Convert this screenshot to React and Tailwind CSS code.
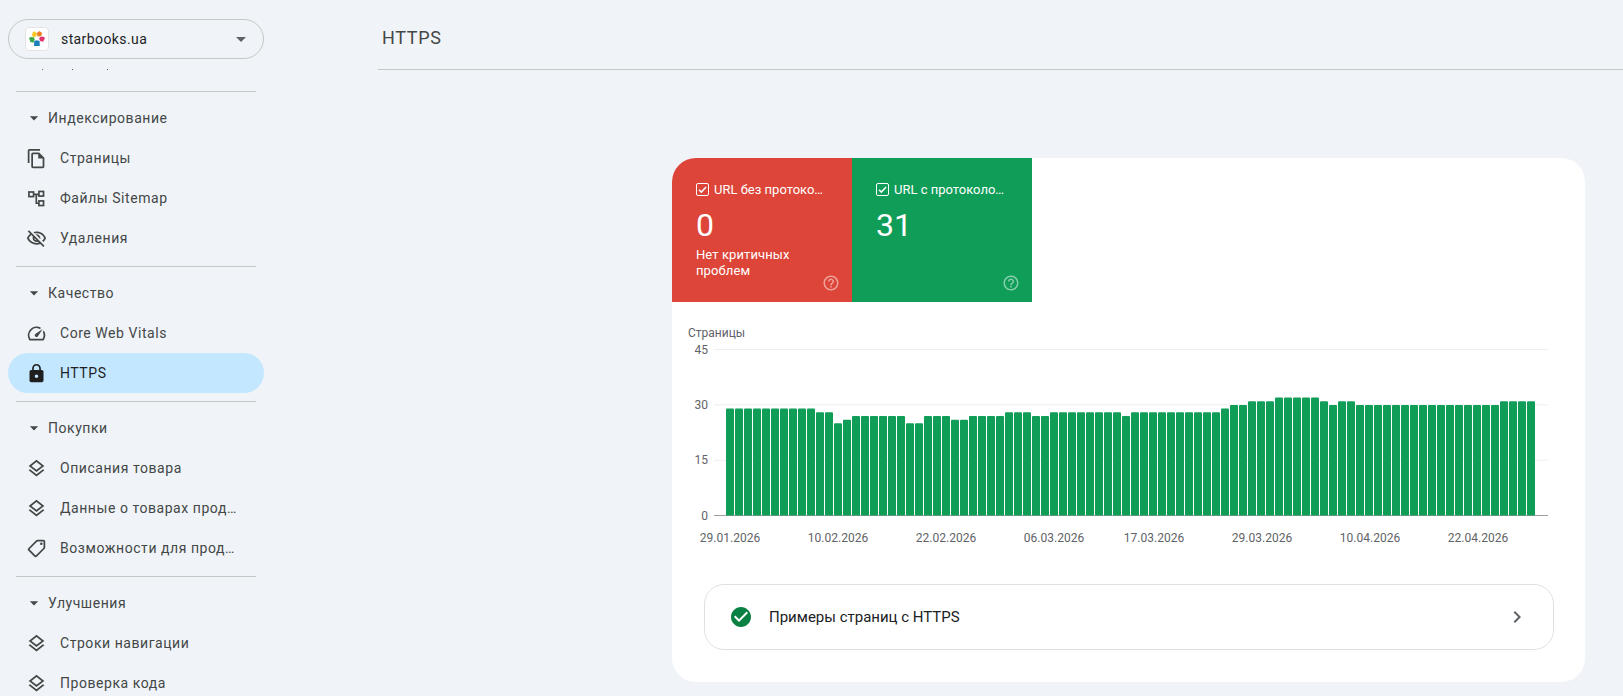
import {
  MdOutlineFileCopy,
  MdOutlineVisibilityOff,
  MdOutlineSpeed,
  MdLock,
  MdOutlineLayers,
  MdOutlineLocalOffer,
  MdArrowDropDown,
  MdCheckCircle,
  MdChevronRight,
  MdHelpOutline,
} from 'react-icons/md';

const SitemapIcon = ({ className }) => (
  <svg viewBox="0 0 20 20" fill="none" stroke="currentColor" strokeWidth="1.6" className={className}>
    <rect x="2.8" y="3.8" width="4.4" height="4.4" />
    <rect x="12.3" y="3.3" width="4.4" height="4.4" />
    <rect x="12.3" y="12.3" width="4.4" height="4.4" />
    <path d="M7.2 6h5.1M9.8 6v8.5h2.5" />
  </svg>
);

const TagIcon = ({ className }) => <MdOutlineLocalOffer className={`${className} -scale-x-100`} />;

const Logo = () => (
  <svg viewBox="0 0 24 24" className="w-6 h-6 shrink-0">
    <path d="M7.500 5.500l1.700-1.200 1.600 1.200.9.300-.3 3.700-3.300.6-1.400-2.400.9-.8z" fill="#f9c623" />
    <path d="M12.800 5.200l1.700-1.200 1.600 1.200 1 .7-1 3.300-3.300.4-1.200-3.200z" fill="#ee7d23" />
    <path d="M14.800 10.300l2-.8 2.200.5 1 1-1.900 3.700-3-.7-.9-2.300z" fill="#e0346f" />
    <path d="M9.200 14l2.700-.8 2.700.8.200 5h-5.800z" fill="#1f7fb8" />
    <path d="M4 10.800l2.200-.8 3 .6.500 2.200-1.500 3-2.800-.9z" fill="#3aa845" />
  </svg>
);

const CheckSmall = () => (
  <svg viewBox="0 0 13 13" fill="none" stroke="#fff" className="w-[13px] h-[13px] shrink-0">
    <rect x="0.5" y="0.5" width="12" height="12" rx="1.5" />
    <path d="M3 6.800l2.300 2.300 4.800-5" strokeWidth="1.500" />
  </svg>
);

const sections = [
  {
    title: 'Индексирование',
    items: [
      { label: 'Страницы', Icon: MdOutlineFileCopy },
      { label: 'Файлы Sitemap', Icon: SitemapIcon },
      { label: 'Удаления', Icon: MdOutlineVisibilityOff },
    ],
  },
  {
    title: 'Качество',
    items: [
      { label: 'Core Web Vitals', Icon: MdOutlineSpeed },
      { label: 'HTTPS', Icon: MdLock, active: true },
    ],
  },
  {
    title: 'Покупки',
    items: [
      { label: 'Описания товара', Icon: MdOutlineLayers },
      { label: 'Данные о товарах продавца', Icon: MdOutlineLayers },
      { label: 'Возможности для продавцов', Icon: TagIcon },
    ],
  },
  {
    title: 'Улучшения',
    items: [
      { label: 'Строки навигации', Icon: MdOutlineLayers },
      { label: 'Проверка кода', Icon: MdOutlineLayers },
    ],
  },
];

const Sidebar = () => (
  <aside className="w-[272px] shrink-0 font-['Roboto',sans-serif]">
    <div className="h-[69px] pt-[19px] px-2">
      <div className="h-10 w-[256px] rounded-full border border-[#c4c7c5] flex items-center pl-4 pr-[7px]">
        <span className="w-6 h-6 bg-white border border-[#e3e3e3] rounded-sm flex items-center justify-center shrink-0">
          <Logo />
        </span>
        <span className="ml-3 text-sm text-[#1f1f1f] tracking-[0.4px] flex-1">starbooks.ua</span>
        <MdArrowDropDown className="w-6 h-6 text-[#5f6368] mr-[3px]" />
      </div>
    </div>
    <div className="h-px flex text-[0px]">
      <span className="ml-[42px] w-px h-px bg-[#777]" />
      <span className="ml-[29px] w-px h-px bg-[#555]" />
      <span className="ml-[34px] w-px h-px bg-[#555]" />
    </div>
    <nav className="mt-[21px]">
      {sections.map((s) => (
        <div key={s.title} className="mb-2">
          <div className="h-px mx-4 bg-[#c4c7c5]" />
          <div className="h-[46px] pt-1.5 pl-6 flex items-center text-sm text-[#444746] tracking-[0.55px]">
            <MdArrowDropDown className="w-5 h-5 mr-1 text-[#444746]" />
            {s.title}
          </div>
          {s.items.map(({ label, Icon, active }) => (
            <div
              key={label}
              className={`h-10 mx-2 pl-[18px] pr-6 rounded-full flex items-center text-sm tracking-[0.55px] ${
                active ? 'bg-[#c2e7ff] text-[#1f1f1f]' : 'text-[#444746]'
              }`}
            >
              <Icon className={`w-[21px] h-[21px] shrink-0 ${active ? 'text-[#1f1f1f]' : 'text-[#444746]'}`} />
              <span className="ml-[13px] truncate">{label}</span>
            </div>
          ))}
        </div>
      ))}
    </nav>
  </aside>
);

const Tile = ({ color, title, value, note }) => (
  <div className={`relative w-[180px] h-36 ${color} text-white pl-6 pt-6 flex flex-col`}>
    <div className="flex items-center gap-[5px] pr-6 text-[13px] h-[15px]">
      <CheckSmall />
      <span className="truncate">{title}</span>
    </div>
    <div className="text-[32px] leading-[38px] mt-[9px]">{value}</div>
    {note && <div className="text-[13px] leading-4 mt-[3px] w-[110px] tracking-[0.1px]">{note}</div>}
    <MdHelpOutline className="absolute right-[12px] bottom-[10px] w-[18px] h-[18px] text-white/50" />
  </div>
);

const values = [
  ...Array(10).fill(29),
  28, 28, 25, 26,
  ...Array(6).fill(27),
  25, 25, 27, 27, 27, 26, 26,
  ...Array(4).fill(27),
  28, 28, 28, 27, 27,
  ...Array(8).fill(28),
  27,
  ...Array(10).fill(28),
  29, 30, 30, 31, 31, 31,
  32, 32, 32, 32, 32,
  31, 30, 31, 31,
  ...Array(16).fill(30),
  31, 31, 31, 31,
];

const xLabels = [
  ['29.01.2026', 58],
  ['10.02.2026', 166],
  ['22.02.2026', 274],
  ['06.03.2026', 382],
  ['17.03.2026', 482],
  ['29.03.2026', 590],
  ['10.04.2026', 698],
  ['22.04.2026', 806],
];

// y of the zero line and px per page inside the svg
const zero = 193.5;
const unit = 3.687;

const Chart = () => (
  <svg width="913" height="232" className="block font-['Roboto',sans-serif]">
    <text x="16" y="15" fontSize="12" fill="#5f6368">Страницы</text>
    {[45, 30, 15].map((v) => (
      <line key={v} x1="42" x2="876" y1={zero - v * unit} y2={zero - v * unit} stroke="#eeeeee" />
    ))}
    <line x1="42" x2="876" y1={zero} y2={zero} stroke="#9e9e9e" />
    {[45, 30, 15, 0].map((v) => (
      <text key={v} x="36" y={zero - v * unit + 4} fontSize="12" fill="#5f6368" textAnchor="end">{v}</text>
    ))}
    {values.map((v, i) => {
      const h = v * unit;
      return (
        <path
          key={i}
          d={`M${54 + i * 9} ${zero}v${-h + 1}q0 -1 1 -1h6q1 0 1 1v${h - 1}z`}
          fill="#0f9d58"
        />
      );
    })}
    {xLabels.map(([t, x]) => (
      <text key={t} x={x} y="220" fontSize="12" fill="#5f6368" textAnchor="middle">{t}</text>
    ))}
  </svg>
);

export default function App() {
  return (
    <div className="h-[696px] overflow-hidden bg-[#f0f4f9] flex">
      <Sidebar />
      <main className="flex-1 pl-[106px] font-['Roboto',sans-serif]">
        <div className="h-[70px] border-b border-[#c4c7c5] pl-1 pt-1.5 flex items-center text-lg text-[#444746] tracking-[0.65px]">
          HTTPS
        </div>
        <div className="ml-[294px] mt-[88px] w-[913px] h-[524px] bg-white rounded-3xl overflow-hidden">
          <div className="flex">
            <Tile color="bg-[#dd4539]" title="URL без протокола HTTPS" value="0" note="Нет критичных проблем" />
            <Tile color="bg-[#0f9d58]" title="URL с протоколом HTTPS" value="31" />
          </div>
          <div className="pt-5">
            <Chart />
          </div>
          <div className="ml-8 mr-[31px] mt-[30px] h-[66px] border border-[#e0e0e0] rounded-[20px] flex items-center px-6">
            <MdCheckCircle className="w-6 h-6 text-[#0b8043]" />
            <span className="ml-4 flex-1 text-[15px] text-[#202124]">Примеры страниц с HTTPS</span>
            <MdChevronRight className="w-6 h-6 text-[#5f6368] -ml-px" />
          </div>
        </div>
      </main>
    </div>
  );
}
